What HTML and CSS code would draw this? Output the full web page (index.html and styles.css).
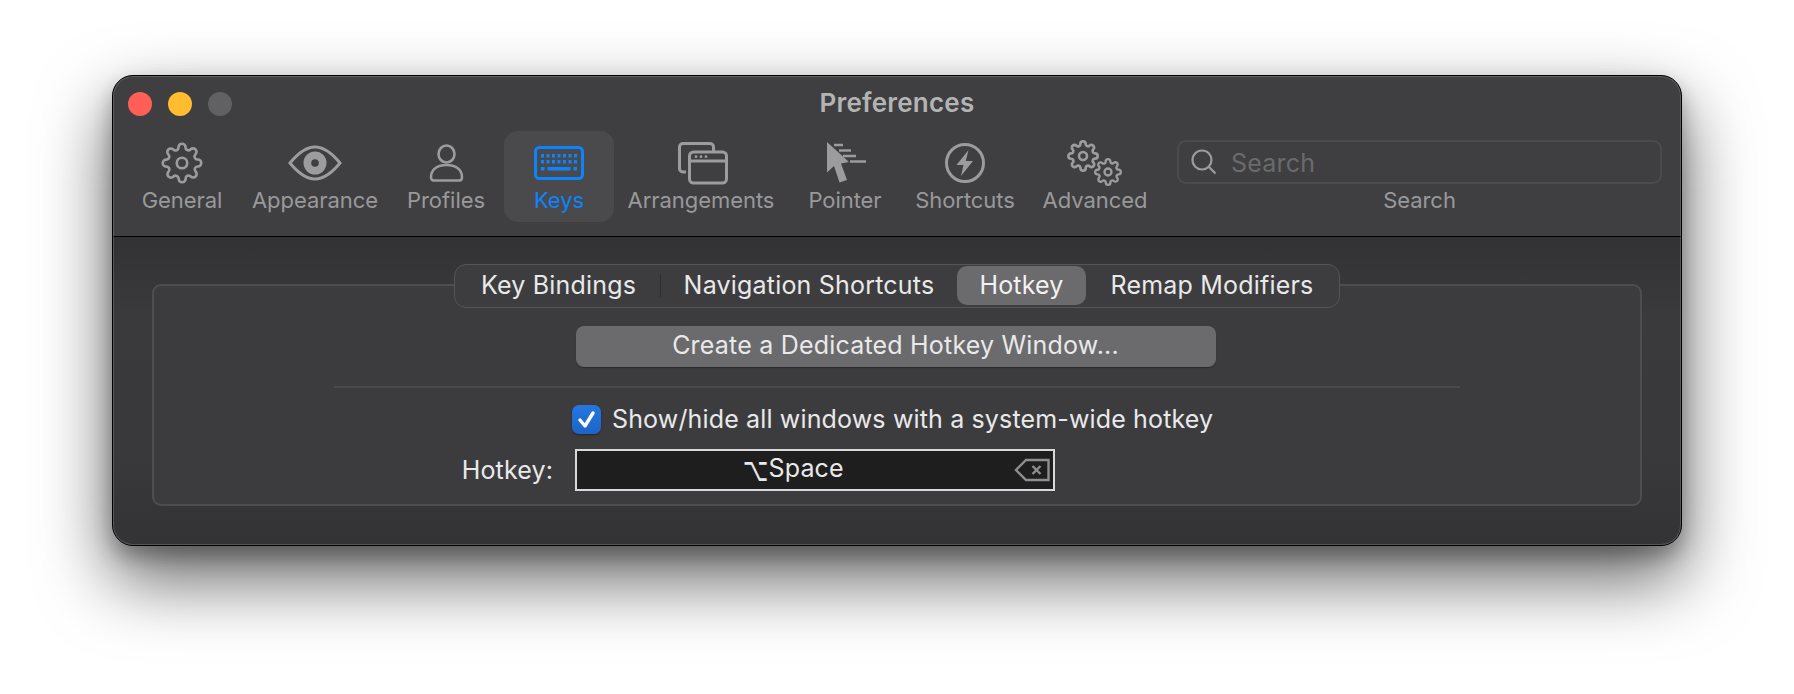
FILE: index.html
```html
<!DOCTYPE html>
<html lang="en">
<head>
<meta charset="utf-8">
<title>Preferences</title>
<link rel="stylesheet" href="styles.css">
</head>
<body>
<svg class="defs" width="0" height="0" aria-hidden="true">
  <symbol id="gear" viewBox="0 0 24 24">
    <circle cx="12" cy="12" r="3"/>
    <path d="M19.4 15a1.65 1.65 0 0 0 .33 1.82l.06.06a2 2 0 0 1 0 2.83 2 2 0 0 1-2.83 0l-.06-.06a1.65 1.65 0 0 0-1.82-.33 1.65 1.65 0 0 0-1 1.51V21a2 2 0 0 1-2 2 2 2 0 0 1-2-2v-.09A1.65 1.65 0 0 0 9 19.4a1.65 1.65 0 0 0-1.82.33l-.06.06a2 2 0 0 1-2.83 0 2 2 0 0 1 0-2.83l.06-.06a1.65 1.65 0 0 0 .33-1.82 1.65 1.65 0 0 0-1.51-1H3a2 2 0 0 1-2-2 2 2 0 0 1 2-2h.09A1.65 1.65 0 0 0 4.6 9a1.65 1.65 0 0 0-.33-1.82l-.06-.06a2 2 0 0 1 0-2.83 2 2 0 0 1 2.83 0l.06.06a1.65 1.65 0 0 0 1.82.33H9a1.65 1.65 0 0 0 1-1.51V3a2 2 0 0 1 2-2 2 2 0 0 1 2 2v.09a1.65 1.65 0 0 0 1 1.51 1.65 1.65 0 0 0 1.82-.33l.06-.06a2 2 0 0 1 2.83 0 2 2 0 0 1 0 2.83l-.06.06a1.65 1.65 0 0 0-.33 1.82V9a1.65 1.65 0 0 0 1.51 1H21a2 2 0 0 1 2 2 2 2 0 0 1-2 2h-.09a1.65 1.65 0 0 0-1.51 1z"/>
  </symbol>
</svg>
<main class="window">
  <header class="titlebar">
    <div class="lights">
      <span class="light red"></span>
      <span class="light yellow"></span>
      <span class="light grey"></span>
    </div>
    <div class="title">Preferences</div>
  </header>
  <nav class="toolbar">
    <div class="item">
      <div class="icon"><svg class="stroke" width="42" height="42" viewBox="0 0 42 42"><use href="#gear" width="42" height="42"/></svg></div>
      <div class="label">General</div>
    </div>
    <div class="item">
      <div class="icon"><svg width="54" height="36" viewBox="0 0 54 36"><path class="line" d="M2 18C11 7 19 2 27 2s16 5 25 16C43 29 35 34 27 34S11 29 2 18Z"/><circle class="fill" cx="27" cy="18" r="11.5"/><circle class="hole" cx="27" cy="18" r="3.8"/></svg></div>
      <div class="label">Appearance</div>
    </div>
    <div class="item">
      <div class="icon"><svg width="35" height="38" viewBox="0 0 35 38"><ellipse class="line soft" cx="17.500" cy="10" rx="8" ry="8.500"/><path class="line soft" d="M2 33c0-8 7-12 15.500-12S33 25 33 33c0 2-1 3.500-2.500 3.500h-26C3 36.500 2 35 2 33Z"/></svg></div>
      <div class="label">Profiles</div>
    </div>
    <div class="item active">
      <div class="icon"><svg width="50" height="34" viewBox="0 0 50 34"><rect class="kb-frame" x="1.500" y="1.500" width="47" height="31" rx="4"/><g class="kb-keys"><rect x="7" y="8" width="3" height="3.500"/><rect x="12.500" y="8" width="3" height="3.500"/><rect x="18" y="8" width="3" height="3.500"/><rect x="23.500" y="8" width="3" height="3.500"/><rect x="29" y="8" width="3" height="3.500"/><rect x="34.500" y="8" width="3" height="3.500"/><rect x="40" y="8" width="3" height="3.500"/><rect x="7" y="14" width="3" height="3.500"/><rect x="12.500" y="14" width="3" height="3.500"/><rect x="18" y="14" width="3" height="3.500"/><rect x="23.500" y="14" width="3" height="3.500"/><rect x="29" y="14" width="3" height="3.500"/><rect x="34.500" y="14" width="3" height="3.500"/><rect x="40" y="14" width="3" height="3.500"/><rect x="7" y="21" width="3.500" height="3.500"/><rect x="13.500" y="21" width="23" height="3.500"/><rect x="39.500" y="21" width="3.500" height="3.500"/></g></svg></div>
      <div class="label">Keys</div>
    </div>
    <div class="item">
      <div class="icon shift"><svg width="50" height="44" viewBox="0 0 50 44"><path class="line" d="M8 31H5c-2 0-3.500-1.500-3.500-3.500V6C1.500 4 3 2.500 5 2.500h27c2 0 3.500 1.500 3.500 3.500v5"/><rect class="line" x="11.500" y="11" width="37" height="31" rx="4"/><path class="line" d="M11.500 20h37"/><circle class="fill" cx="18" cy="15.700" r="1.400"/><circle class="fill" cx="23" cy="15.700" r="1.400"/><circle class="fill" cx="28" cy="15.700" r="1.400"/></svg></div>
      <div class="label">Arrangements</div>
    </div>
    <div class="item">
      <div class="icon shift"><svg width="40" height="41" viewBox="0 0 40 41"><path class="fill" d="M0 0 22 20l-8 1.500L20 38l-7.500 2.500-5.500-16.500L0 30.500Z"/><path class="bars" d="M7 3h9M12 8.500h12M16 14h13M23 19.500h16"/></svg></div>
      <div class="label">Pointer</div>
    </div>
    <div class="item">
      <div class="icon"><svg width="42" height="42" viewBox="0 0 42 42"><circle class="line" cx="21" cy="21" r="18.500"/><path class="fill" d="M24.500 8 12.500 23h7l-2.500 11 12-15h-7.200Z"/></svg></div>
      <div class="label">Shortcuts</div>
    </div>
    <div class="item">
      <div class="icon"><svg class="stroke thin" width="56" height="46" viewBox="0 0 56 46"><use href="#gear" x="0" y="0" width="32" height="32"/><use href="#gear" x="27" y="18" width="28" height="28"/></svg></div>
      <div class="label">Advanced</div>
    </div>
    <div class="item search">
      <div class="searchfield">
        <svg width="28" height="28" viewBox="0 0 28 28"><circle class="line hair" cx="12" cy="12" r="9.500"/><path class="line hair" d="m19 19 6.500 6.500"/></svg>
        <span class="placeholder">Search</span>
      </div>
      <div class="label">Search</div>
    </div>
  </nav>
  <section class="content">
    <div class="group">
      <div class="tabs">
        <div class="tab first">Key Bindings</div>
        <div class="tab">Navigation Shortcuts</div>
        <div class="tab selected">Hotkey</div>
        <div class="tab">Remap Modifiers</div>
      </div>
      <div class="button">Create a Dedicated Hotkey Window...</div>
      <div class="divider"></div>
      <div class="checkrow">
        <span class="checkbox"><svg width="29" height="29" viewBox="0 0 29 29"><path d="m8 15 5 6 8-13"/></svg></span>
        <span class="text">Show/hide all windows with a system-wide hotkey</span>
      </div>
      <div class="hotkeyrow">
        <span class="text hotkeylabel">Hotkey:</span>
        <div class="hotkeyfield">
          <span class="text hotkeyvalue"><span class="opt">⌥</span>Space</span>
          <svg class="erase" width="36" height="24" viewBox="0 0 36 24"><path d="M34.500 2H12L2 12l10 10h22.500Z"/><path d="m18.500 8 8 8m0-8-8 8"/></svg>
        </div>
      </div>
    </div>
  </section>
</main>
</body>
</html>
```
FILE: styles.css
```css
* { box-sizing: border-box; }
html, body { margin: 0; height: 694px; overflow: hidden; background: #fff; }
body {
  padding: 75px 0 0 112px;
  font-family: Inter, "Noto Sans", "Liberation Sans", sans-serif;
}
.defs { position: absolute; }
.window {
  width: 1570px;
  height: 471px;
  border: 1px solid #000;
  border-radius: 21px;
  overflow: hidden;
  display: flex;
  flex-direction: column;
  background: #3f3f41;
  box-shadow: 0 32px 70px 2px rgba(0,0,0,.6), 0 10px 20px rgba(0,0,0,.28);
  position: relative;
}
.window::after {
  content: "";
  position: absolute;
  inset: 0;
  border-radius: 20px;
  box-shadow: inset 0 0 0 1px rgba(255,255,255,.17);
  pointer-events: none;
}
.titlebar {
  height: 55px;
  flex: none;
  display: grid;
  grid-template-columns: 1fr auto 1fr;
  align-items: center;
}
.lights { display: flex; gap: 16px; margin-left: 15px; }
.light { width: 24px; height: 24px; border-radius: 50%; }
.red { background: #ff5f57; }
.yellow { background: #febc2e; }
.grey { background: #616163; }
.title {
  font-size: 26px;
  letter-spacing: .2px;
  line-height: 30px;
  margin-top: -1px;
  font-weight: 600;
  color: #b4b4b5;
}
.toolbar {
  height: 106px;
  flex: none;
  padding-left: 9px;
  display: grid;
  grid-template-columns: 120px 146px 116px 110px 174px 114px 126px 134px 485px;
  align-content: start;
  border-bottom: 1px solid #000;
}
.item {
  height: 91px;
  padding-top: 10px;
  border-radius: 14px;
  display: flex;
  flex-direction: column;
  align-items: center;
}
.item.search { margin-left: 15px; width: 485px; padding-top: 9px; }
.icon {
  height: 43px;
  width: 100%;
  display: flex;
  align-items: center;
  justify-content: center;
}
.icon.shift { padding-left: 4px; }
.label {
  margin-top: 2px;
  font-size: 22px;
  letter-spacing: -.05px;
  line-height: 28px;
  color: #99999b;
  white-space: nowrap;
}
.active { background: #4a4a4c; }
.active .label { color: #0a84ff; }
.line { fill: none; stroke: #9c9c9e; stroke-width: 3; }
.line.soft { stroke-width: 2.600; }
.line.hair { stroke-width: 2.200; }
.fill { fill: #9c9c9e; }
.hole { fill: #3f3f41; }
.bars { stroke: #9c9c9e; stroke-width: 2.400; fill: none; }
.stroke { fill: none; stroke: #9c9c9e; stroke-width: 1.500; }
.stroke.thin { stroke-width: 2; }
.kb-frame { fill: none; stroke: #0a84ff; stroke-width: 3; }
.kb-keys { fill: #0a84ff; }
.searchfield {
  width: 485px;
  height: 44px;
  padding-left: 11px;
  border: 2px solid #4b4b4d;
  border-radius: 9px;
  display: flex;
  align-items: center;
  gap: 13px;
}
.placeholder {
  font-size: 25px;
  letter-spacing: .2px;
  line-height: 30px;
  padding-top: 1px;
  color: #6a6a6c;
}
.content {
  flex: 1;
  padding: 47px 39px 0;
  background: linear-gradient(#323234, #3a3a3c 25%, #39393b 70%, #333335);
}
.group {
  height: 222px;
  border: 2px solid #4e4e50;
  border-radius: 9px;
  background: #3c3c3e;
  display: flex;
  flex-direction: column;
  align-items: center;
}
.tabs {
  margin-top: -22px;
  height: 44px;
  padding: 1px;
  display: grid;
  grid-template-columns: 205px 296px 129px 252px;
  border: 1.500px solid #555557;
  border-radius: 12px;
  background: #3d3d3f;
}
.tab {
  font-size: 25px;
  letter-spacing: .2px;
  color: #e9e9ea;
  text-align: center;
  line-height: 38px;
  height: 39px;
  position: relative;
}
.tab.first::after {
  content: "";
  position: absolute;
  right: 0;
  top: 8px;
  bottom: 8px;
  width: 1.500px;
  background: #2e2e30;
}
.tab.selected {
  background: #6b6b6d;
  border-radius: 10px;
  color: #f2f2f2;
}
.button {
  margin-top: 18px;
  margin-right: 3px;
  width: 640px;
  height: 41px;
  border-radius: 8px;
  background: #6b6b6d;
  box-shadow: 0 1px 1px rgba(0,0,0,.3);
  color: #e9e9ea;
  font-size: 25px;
  letter-spacing: .2px;
  line-height: 38px;
  text-align: center;
}
.divider {
  margin-top: 19px;
  margin-right: 1px;
  width: 1126px;
  height: 2px;
  background: #4b4b4d;
}
.text { font-size: 25px; letter-spacing: .15px; line-height: 30px; color: #e9e9ea; white-space: nowrap; }
.checkrow {
  margin-top: 17px;
  align-self: flex-start;
  margin-left: 418px;
  display: flex;
  align-items: center;
  gap: 11px;
  height: 29px;
}
.checkrow .text { margin-top: -2px; }
.checkbox {
  width: 29px;
  height: 29px;
  border-radius: 7px;
  background: linear-gradient(#2477e0, #1c64c8);
  box-shadow: 0 1px 2px rgba(0,0,0,.4);
}
.checkbox svg { display: block; }
.checkbox path { fill: none; stroke: #fff; stroke-width: 3.400; stroke-linecap: round; stroke-linejoin: round; }
.hotkeyrow {
  margin-top: 15px;
  align-self: flex-start;
  margin-left: 307px;
  display: flex;
  align-items: center;
  gap: 22px;
}
.hotkeylabel { width: 92px; text-align: right; }
.hotkeyfield {
  width: 480px;
  height: 42px;
  border: 2px solid #d9d9d9;
  background: #1e1e1e;
  display: flex;
  align-items: center;
  justify-content: flex-end;
  padding-right: 3px;
  position: relative;
}
.hotkeyvalue {
  position: absolute;
  left: 166px;
  top: 2px;
}
.opt {
  display: inline-block;
  font-family: "DejaVu Sans", sans-serif;
  font-size: 22px;
  transform: scaleY(1.5);
}
.erase path { fill: none; stroke: #8e8e90; stroke-width: 2.400; }
```
